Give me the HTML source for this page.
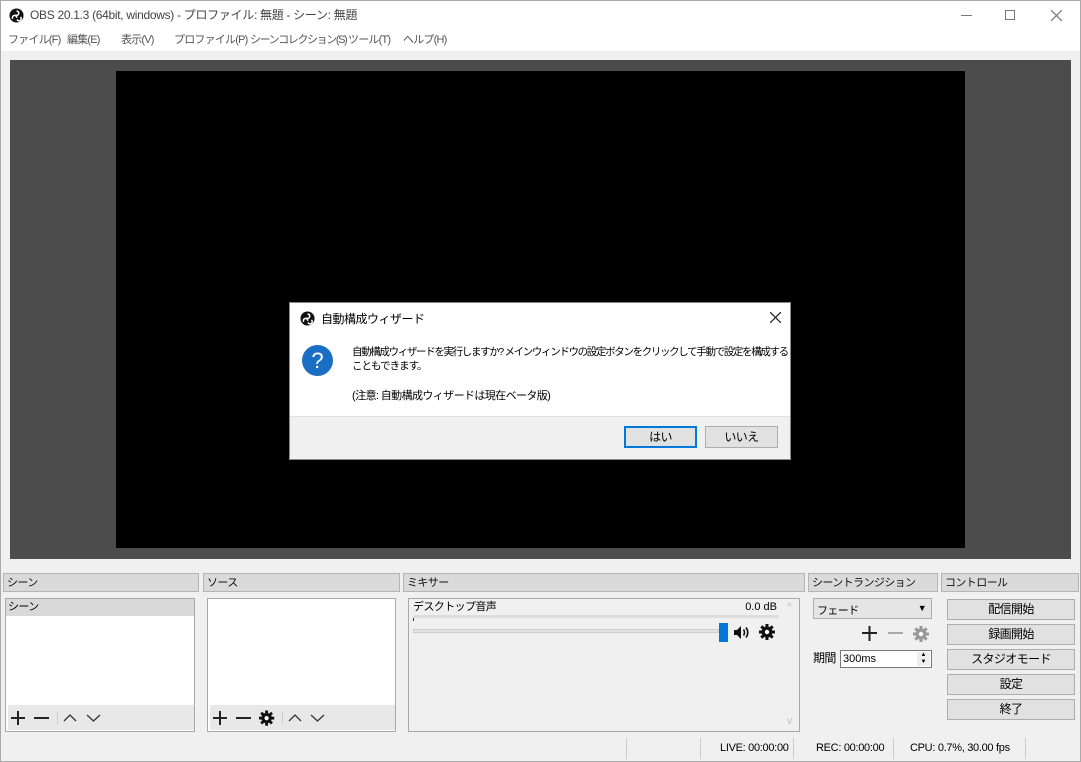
<!DOCTYPE html>
<html><head><meta charset="utf-8"><style>
*{margin:0;padding:0;box-sizing:border-box}
body{width:1081px;height:762px;position:relative;overflow:hidden;background:#f0f0f0;font-family:"Liberation Sans","Noto Sans CJK JP",sans-serif;font-size:12px;color:#000}
.a{position:absolute}
.t{white-space:nowrap;line-height:1}
.n{letter-spacing:-1px}
.dock{position:absolute;top:573px;height:19px;background:#dadada;border:1px solid #b4b4b4;padding:3px 3px;font-size:11px;line-height:12px;color:#111;letter-spacing:-0.6px}
.box{position:absolute;border:1px solid #a8a8a8;background:#fff}
.btn{position:absolute;background:#e1e1e1;border:1px solid #adadad;text-align:center;font-size:12px;line-height:18px;letter-spacing:-0.6px}
</style></head><body>
<svg width="0" height="0" style="position:absolute"><defs>
<g id="gear"><g fill="currentColor"><rect x="6.5" y="0" width="3" height="16"/><rect x="6.5" y="0" width="3" height="16" transform="rotate(45 8 8)"/><rect x="6.5" y="0" width="3" height="16" transform="rotate(90 8 8)"/><rect x="6.5" y="0" width="3" height="16" transform="rotate(135 8 8)"/><circle cx="8" cy="8" r="5.5"/></g><circle cx="8" cy="8" r="2.2" fill="#fff"/></g>
<g id="logo"><circle cx="8" cy="8" r="7.5" fill="#111"/><path d="M8 3.2a2.3 2.3 0 1 1 -1 4.3M4 11.5a2.3 2.3 0 1 1 4.2 -1M12.2 9.6a2.3 2.3 0 1 1 -3.6 2.6" stroke="#fff" stroke-width="1.6" fill="none"/></g>
</defs></svg>
<div class="a" style="left:0;top:0;width:1081px;height:51px;background:#fff;border:1px solid #aaa;border-bottom:none"></div>
<svg class="a" style="left:9px;top:8px" width="15" height="15" viewBox="0 0 16 16"><use href="#logo"/></svg>
<div class="a t" style="left:30px;top:9px;font-size:12px;color:#444;letter-spacing:-0.3px">OBS 20.1.3 (64bit, windows) - プロファイル: 無題 - シーン: 無題</div>
<div class="a" style="left:961px;top:15px;width:11px;height:1px;background:#777"></div>
<div class="a" style="left:1005px;top:10px;width:10px;height:10px;border:1px solid #777"></div>
<svg class="a" style="left:1051px;top:10px" width="11" height="11"><path d="M0 0L11 11M11 0L0 11" stroke="#777" stroke-width="1.2"/></svg>
<div class="a t" style="left:8px;top:35px;color:#555;font-size:11px;letter-spacing:-0.8px">
<span class="a" style="left:0">ファイル(F)</span><span class="a" style="left:59px">編集(E)</span><span class="a" style="left:113px">表示(V)</span><span class="a" style="left:166px">プロファイル(P)</span><span class="a" style="left:242px;letter-spacing:-1.4px">シーンコレクション(S)</span><span class="a" style="left:340px">ツール(T)</span><span class="a" style="left:395px">ヘルプ(H)</span></div>
<div class="a" style="left:10px;top:60px;width:1061px;height:499px;background:#4c4c4c"></div>
<div class="a" style="left:116px;top:71px;width:849px;height:477px;background:#000"></div>

<div class="dock" style="left:3px;width:196px">シーン</div>
<div class="dock" style="left:203px;width:197px">ソース</div>
<div class="dock" style="left:403px;width:402px">ミキサー</div>
<div class="dock" style="left:808px;width:130px">シーントランジション</div>
<div class="dock" style="left:941px;width:138px">コントロール</div>

<div class="box" style="left:5px;top:598px;width:190px;height:134px">
 <div class="a t" style="left:0;top:0;width:188px;height:17px;background:#d9d9d9;padding:3px 2px;font-size:11px;letter-spacing:-0.6px">シーン</div>
 <div class="a" style="left:2px;top:106px;width:186px;height:25px;background:#e8e8e8"></div>
 <svg class="a" style="left:5px;top:112px" width="95" height="14"><path d="M0 7H14M7 0V14M23 7H38" stroke="#222" stroke-width="2"/><path d="M46.5 1V13" stroke="#ccc"/><path d="M53 10L59 4L65 10M76 4L82.5 10L89 4" stroke="#333" stroke-width="1.3" fill="none"/></svg>
</div>
<div class="box" style="left:207px;top:598px;width:189px;height:134px">
 <div class="a" style="left:2px;top:106px;width:185px;height:25px;background:#e8e8e8"></div>
 <svg class="a" style="left:5px;top:111px" width="120" height="16"><path d="M0 8H14M7 1V15M23 8H38" stroke="#222" stroke-width="2"/><g transform="translate(46,0.5) scale(0.95)" color="#111"><use href="#gear"/></g><path d="M69.5 2V14" stroke="#ccc"/><path d="M76 11L82 5L88 11M98 5L104.5 11L111 5" stroke="#333" stroke-width="1.3" fill="none"/></svg>
</div>
<div class="box" style="left:408px;top:598px;width:392px;height:134px;background:#f0f0f0">
 <div class="a t" style="left:4px;top:3px;font-size:11px;letter-spacing:-0.6px">デスクトップ音声</div>
 <div class="a t" style="right:22px;top:3px;font-size:11px">0.0 dB</div>
 <div class="a" style="left:4px;top:16px;width:366px;height:3px;background:#ddd"></div>
 <div class="a" style="left:4px;top:19px;width:1px;height:3px;background:#333"></div>
 <div class="a" style="left:4px;top:30px;width:306px;height:4px;background:#e4e4e4;border:1px solid #ccc"></div>
 <div class="a" style="left:310px;top:24px;width:9px;height:19px;background:#0078d7"></div>
 <svg class="a" style="left:325px;top:27px" width="16" height="13"><path d="M0 4H3L7 0V13L3 9H0Z" fill="#111"/><path d="M9.5 3.5Q11.5 6.5 9.5 9.5M12 1.5Q15.5 6.5 12 11.5" stroke="#111" stroke-width="1.6" fill="none"/></svg>
 <svg class="a" style="left:350px;top:25px" width="16" height="16" color="#111"><use href="#gear"/></svg>
 <div class="a" style="left:374px;top:0;width:16px;height:132px;background:#f0f0f0"></div>
 <div class="a t" style="left:378px;top:4px;color:#bbb;font-size:10px">^</div>
 <div class="a t" style="left:378px;top:118px;color:#bbb;font-size:10px">v</div>
</div>

<div class="a" style="left:813px;top:598px;width:119px;height:21px;background:#e5e5e5;border:1px solid #adadad;padding:3px 3px;font-size:11px;letter-spacing:-0.6px">フェード<span style="position:absolute;right:5px;top:4px;font-size:9px">▼</span></div>
<svg class="a" style="left:862px;top:626px" width="70" height="16"><path d="M0 7H15M7.5 0V15" stroke="#222" stroke-width="2"/><path d="M26 7H41" stroke="#aaa" stroke-width="2"/><g transform="translate(51,0)" color="#999"><use href="#gear"/></g></svg>
<div class="a t" style="left:813px;top:652px;font-size:12px;letter-spacing:-0.6px">期間</div>
<div class="a" style="left:840px;top:650px;width:92px;height:18px;background:#fff;border:1px solid #7a7a7a;padding:2px 2px;font-size:11px">300ms<span style="position:absolute;right:1px;top:1px;width:13px;height:14px;background:#eee;font-size:6px;line-height:7px;text-align:center">▲<br>▼</span></div>

<div class="btn" style="left:947px;top:599px;width:128px;height:21px">配信開始</div>
<div class="btn" style="left:947px;top:624px;width:128px;height:21px">録画開始</div>
<div class="btn" style="left:947px;top:649px;width:128px;height:21px">スタジオモード</div>
<div class="btn" style="left:947px;top:674px;width:128px;height:21px">設定</div>
<div class="btn" style="left:947px;top:699px;width:128px;height:21px">終了</div>

<div class="a" style="left:626px;top:738px;width:1px;height:21px;background:#ccc"></div>
<div class="a" style="left:700px;top:738px;width:1px;height:21px;background:#ccc"></div>
<div class="a" style="left:793px;top:738px;width:1px;height:21px;background:#ccc"></div>
<div class="a" style="left:893px;top:738px;width:1px;height:21px;background:#ccc"></div>
<div class="a" style="left:1025px;top:738px;width:1px;height:21px;background:#ccc"></div>
<div class="a t" style="left:720px;top:743px;font-size:11px;letter-spacing:-0.3px">LIVE: 00:00:00</div>
<div class="a t" style="left:816px;top:743px;font-size:11px;letter-spacing:-0.3px">REC: 00:00:00</div>
<div class="a t" style="left:910px;top:743px;font-size:11px;letter-spacing:-0.3px">CPU: 0.7%, 30.00 fps</div>
<div class="a" style="left:0;top:761px;width:1081px;height:1px;background:#aaa"></div>
<div class="a" style="left:0;top:51px;width:1px;height:711px;background:#aaa"></div>
<div class="a" style="left:1080px;top:51px;width:1px;height:711px;background:#aaa"></div>

<div class="a" style="left:289px;top:302px;width:502px;height:158px;background:#fff;border:1px solid #888;box-shadow:0 0 6px rgba(0,0,0,.3)">
 <svg class="a" style="left:10px;top:8px" width="15" height="15" viewBox="0 0 16 16"><use href="#logo"/></svg>
 <div class="a t" style="left:31px;top:10px;font-size:12px;letter-spacing:-0.5px">自動構成ウィザード</div>
 <svg class="a" style="left:480px;top:9px" width="11" height="11"><path d="M0 0L11 11M11 0L0 11" stroke="#222" stroke-width="1.2"/></svg>
 <div class="a" style="left:12px;top:42px;width:31px;height:31px;border-radius:50%;background:#1a6fc4;color:#fff;font-size:22px;text-align:center;line-height:31px">?</div>
 <div class="a t" style="left:62px;top:44px;font-size:10.5px;letter-spacing:-1.35px">自動構成ウィザードを実行しますか? メインウィンドウの設定ボタンをクリックして手動で設定を構成する</div>
 <div class="a t" style="left:62px;top:58px;font-size:10.5px;letter-spacing:-1px">こともできます。</div>
 <div class="a t" style="left:62px;top:88px;font-size:11px;letter-spacing:-0.6px">(注意: 自動構成ウィザードは現在ベータ版)</div>
 <div class="a" style="left:0;top:113px;width:500px;height:43px;background:#f0f0f0;border-top:1px solid #dfdfdf"></div>
 <div class="btn" style="left:334px;top:123px;width:73px;height:22px;border:2px solid #0078d7;line-height:18px">はい</div>
 <div class="btn" style="left:415px;top:123px;width:73px;height:22px;line-height:20px">いいえ</div>
</div>
</body></html>
